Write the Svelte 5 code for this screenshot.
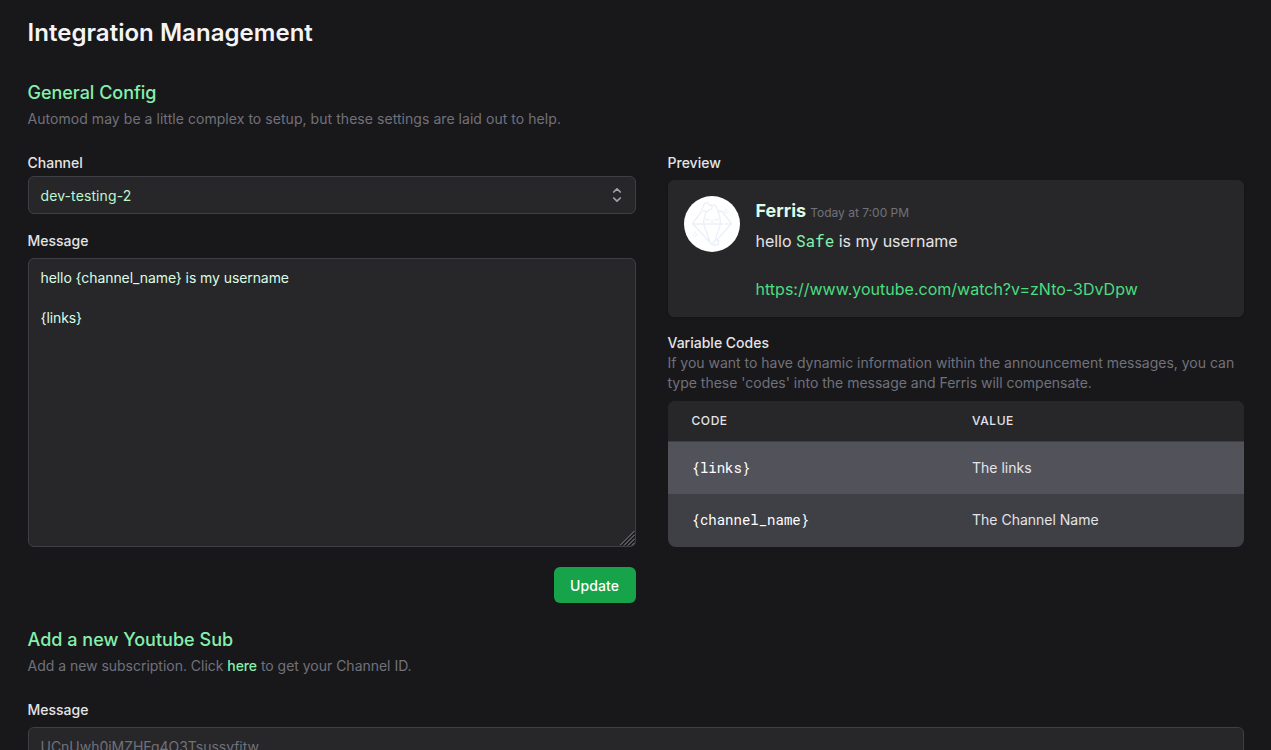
<script>
  let channel = $state('dev-testing-2');
  let message = $state('hello {channel_name} is my username\n\n{links}');
  const codes = [
    { code: '{links}', value: 'The links' },
    { code: '{channel_name}', value: 'The Channel Name' }
  ];
</script>

<main>
  <h1>Integration Management</h1>

  <section class="general">
    <h2>General Config</h2>
    <p class="desc">Automod may be a little complex to setup, but these settings are laid out to help.</p>

    <div class="columns">
      <form class="left" onsubmit={(e) => e.preventDefault()}>
        <span class="label">Channel</span>
        <button type="button" class="field select">
          <span>{channel}</span>
          <svg width="20" height="20" viewBox="0 0 20 20" fill="none" stroke="#a1a1aa" stroke-width="1.7" stroke-linecap="round" stroke-linejoin="round">
            <path d="M6.700 7l3.300-3.200 3.300 3.200m0 6l-3.300 3.200-3.300-3.200" />
          </svg>
        </button>
        <label class="label message-label" for="message">Message</label>
        <div class="area">
          <textarea id="message" class="field" spellcheck="false" bind:value={message}></textarea>
          <svg class="grip" width="15" height="15" viewBox="0 0 15 15" stroke-width="1">
            <path stroke="#111113" d="M1 15L15 1M5 15L15 5M9 15L15 9" />
            <path stroke="#85858a" d="M0 14.500L14.500 0M4 14.500L14.500 4M8 14.500L14.500 8M12 14.500L14.500 12" />
          </svg>
        </div>
        <button class="update">Update</button>
      </form>

      <div class="right">
        <span class="label">Preview</span>
        <div class="preview">
          <svg class="avatar" width="56" height="56" viewBox="0 0 56 56" fill="none" stroke="#ecf0f6" stroke-width="1.3" stroke-linejoin="round" stroke-linecap="round">
            <circle cx="28" cy="28" r="28" fill="#fff" stroke="none" />
            <path d="M17.500 15.500L8.500 27.500L28.500 49L47.500 27.500L38 15.500L34 14.500M8.500 28H39M41.500 28H47.500M19.500 28L26.500 47.500M36.500 28L30 47.500M19.500 28Q20 20 22.500 15.500M26 9.500Q32 7 33.500 14Q36 19 36.500 28" />
            <path d="M22 7q3-1 3 2 4 0 3 3-1 2-3 1.500-1 3.500-4 1.500-2 1-3-1-1-2 1.500-3-.5-3.500 2.500-4z" fill="#fff" />
            <path d="M22 23q1.500 1.500 3 0M31 23q1.500 1.500 3 0M27 25q1 .8 2 0" />
            <path d="M42 13l.8 1.700 1.700.8-1.700.8-.8 1.700-.8-1.700-1.700-.8 1.700-.8zM11 36l.8 1.700 1.700.8-1.700.8-.8 1.700-.8-1.700-1.700-.8 1.700-.8z" stroke-width=".8" />
            <path d="M32 43.500l1.500 1 1.500.3-.8 1.700.6 2-2.300.2-2 1-.6-2-1-1.400 2-.8z" fill="#fff" />
          </svg>
          <div class="body">
            <div class="who"><strong>Ferris</strong><small>Today at 7:00 PM</small></div>
            <div class="text">hello <code>Safe</code> is my username</div>
            <a class="text link" href="#watch">https://www.youtube.com/watch?v=zNto-3DvDpw</a>
          </div>
        </div>

        <span class="label codes-label">Variable Codes</span>
        <p class="desc codes-desc">If you want to have dynamic information within the announcement messages, you can type these 'codes' into the message and Ferris will compensate.</p>
        <div class="table">
          <div class="row head"><span>CODE</span><span>VALUE</span></div>
          {#each codes as item}
            <div class="row"><code>{item.code}</code><span>{item.value}</span></div>
          {/each}
        </div>
      </div>
    </div>
  </section>

  <section class="add">
    <h2>Add a new Youtube Sub</h2>
    <p class="desc">Add a new subscription. Click <a href="#here">here</a> to get your Channel ID.</p>
    <label class="label" for="sub">Message</label>
    <input id="sub" class="field" placeholder="UCnUwh0iMZHFg4O3Tsussyfitw" />
  </section>
</main>

<style>
  :global(html) { background: #18181b; }
  :global(body) { background: #18181b; height: 750px; overflow: hidden; }
  * { box-sizing: border-box; }
  main {
    width: 1216px;
    margin: 0 auto;
    padding-top: 17px;
    font: 14px/20px Inter, sans-serif;
    color: #e4e4e7;
  }
  h1, h2, p { margin: 0; }
  h1 { font-size: 24px; line-height: 32px; font-weight: 600; letter-spacing: 0.04px; color: #f4f4f5; }
  h2 { font-size: 18px; line-height: 24px; font-weight: 500; letter-spacing: -0.03px; color: #86efac; }
  a { text-decoration: none; }
  .general { padding-top: 32px; }
  .desc { margin-top: 4px; color: #71717a; letter-spacing: 0.05px; }
  .add h2 { letter-spacing: 0.02px; }
  .add .desc { letter-spacing: -0.02px; }
  .desc a { color: #86efac; font-weight: 500; letter-spacing: -0.1px; }
  .columns { display: grid; grid-template-columns: 608px 576px; gap: 32px; margin-top: 24px; }
  .left, .right { display: flex; flex-direction: column; }
  .label { display: block; font-weight: 500; color: #e4e4e7; }
  .field {
    display: block;
    width: 100%;
    height: 38px;
    margin: 0;
    padding: 8px 12px;
    border: 1px solid #3f3f46;
    border-radius: 6px;
    outline: none;
    background: #27272a;
    color: #dcfce7;
    font: inherit;
  }
  .select {
    display: flex;
    align-items: center;
    justify-content: space-between;
    margin-top: 3px;
    padding-right: 8px;
    color: #bbf7d0;
    letter-spacing: 0.1px;
  }
  .select span { padding-top: 2px; }
  .message-label { margin-top: 17px; }
  .area { position: relative; margin-top: 7px; }
  textarea.field { height: 289px; padding-top: 9px; resize: none; overflow: hidden; letter-spacing: -0.08px; }
  .grip { position: absolute; right: 1px; bottom: 1px; }
  .update {
    align-self: flex-end;
    width: 82px;
    height: 36px;
    margin-top: 20px;
    padding: 2px 0 0;
    border: 0;
    border-radius: 6px;
    background: #16a34a;
    color: #fff;
    font: 500 14px/20px Inter, sans-serif;
    letter-spacing: 0.1px;
  }
  .preview {
    display: flex;
    gap: 16px;
    height: 137px;
    margin-top: 7px;
    padding: 16px;
    border-radius: 6px;
    background: #27272a;
    box-shadow: 0 1px 3px rgba(0, 0, 0, 0.2);
  }
  .body { padding-top: 1px; }
  .who { display: flex; align-items: baseline; gap: 4px; height: 28px; line-height: 28px; }
  .who strong { font-size: 18px; font-weight: 700; color: #dcfce7; }
  .who small { font-size: 12px; color: #71717a; }
  .text { display: block; font-size: 16px; line-height: 24px; margin-top: 4px; letter-spacing: -0.04px; }
  code { font-family: "Roboto Mono", "DejaVu Sans Mono", monospace; }
  .text code { color: #86efac; line-height: 20px; letter-spacing: 0; }
  .link { margin-top: 24px; color: #4ade80; letter-spacing: 0.01px; }
  .codes-label { margin-top: 16px; }
  .desc.codes-desc { margin-top: 0; letter-spacing: -0.01px; }
  .table { margin-top: 8px; border-radius: 8px; overflow: hidden; background: #3f3f46; }
  .row {
    display: grid;
    grid-template-columns: 280.500px 1fr;
    align-items: center;
    height: 53px;
    padding: 0 24px 1px;
  }
  .row:nth-child(2) { height: 52px; padding-bottom: 0; background: #52525b; }
  .row code { color: #fff; font-size: 14px; }
  .row.head {
    height: 41px;
    padding-bottom: 0;
    border-bottom: 1px solid #3f3f46;
    background: #27272a;
    font-size: 12px;
    font-weight: 500;
    letter-spacing: 0.57px;
  }
  .add { padding-top: 25px; }
  .add .label { margin-top: 24px; }
  .add input { margin-top: 7px; letter-spacing: -0.03px; }
  input::placeholder { color: #71717a; opacity: 1; }
</style>
